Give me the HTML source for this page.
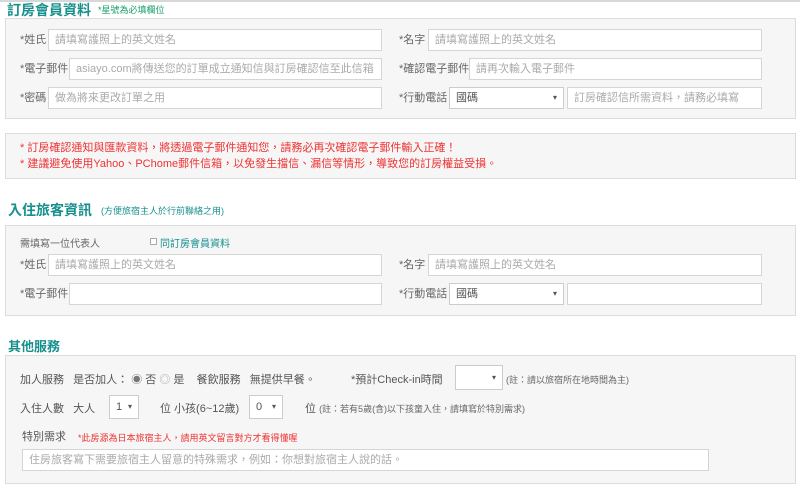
<!DOCTYPE html>
<html><head><meta charset="utf-8"><style>
*{box-sizing:border-box;margin:0;padding:0}
body{width:800px;height:490px;background:#fff;font-family:"Liberation Sans","Noto Sans CJK TC",sans-serif;position:relative;overflow:hidden;color:#555;font-size:11px}
.a{position:absolute;white-space:nowrap}
.panel{position:absolute;left:5px;width:791px;background:#f6f6f6;border:1px solid #dcdcdc}
.inp{position:absolute;height:22px;background:#fff;border:1px solid #d5d5d5;color:#aaa;font-size:11px;line-height:20px;padding-left:6px;white-space:nowrap;overflow:hidden}
.lab{position:absolute;font-size:11px;color:#666;line-height:22px;white-space:nowrap}
.h{position:absolute;color:#17908d;font-weight:bold;font-size:14px;white-space:nowrap}
.sel{position:absolute;background:#fff;border:1px solid #ccc;color:#555;font-size:11px;padding-left:6px}
.sel:after{content:"▾";position:absolute;right:6px;top:0;font-size:8px;color:#555}
</style></head><body>
<div style="position:absolute;left:0;top:0;width:800px;height:2px;background:#d8d8d8"></div>
<div class="h" style="left:7px;top:0px">訂房會員資料</div>
<div class="a" style="left:98px;top:3px;font-size:9px;color:#17a06a">*星號為必填欄位</div>
<div class="panel" style="top:18px;height:101px"></div>
<div class="lab" style="left:20px;top:29px">*姓氏</div><div class="inp" style="left:48px;top:29px;width:334px">請填寫護照上的英文姓名</div>
<div class="lab" style="left:399px;top:29px">*名字</div><div class="inp" style="left:428px;top:29px;width:334px">請填寫護照上的英文姓名</div>
<div class="lab" style="left:20px;top:58px">*電子郵件</div><div class="inp" style="left:69px;top:58px;width:313px">asiayo.com將傳送您的訂單成立通知信與訂房確認信至此信箱</div>
<div class="lab" style="left:399px;top:58px">*確認電子郵件</div><div class="inp" style="left:469px;top:58px;width:293px">請再次輸入電子郵件</div>
<div class="lab" style="left:20px;top:87px">*密碼</div><div class="inp" style="left:48px;top:87px;width:334px">做為將來更改訂單之用</div>
<div class="lab" style="left:399px;top:87px">*行動電話</div><div class="sel" style="left:449px;top:87px;width:115px;height:22px;line-height:20px">國碼</div>
<div class="inp" style="left:567px;top:87px;width:195px">訂房確認信所需資料，請務必填寫</div>

<div class="panel" style="top:133px;height:46px"></div>
<div class="a" style="left:20px;top:140px;color:#e33;font-size:11px;line-height:16px">* 訂房確認通知與匯款資料，將透過電子郵件通知您，請務必再次確認電子郵件輸入正確！<br>* 建議避免使用Yahoo、PChome郵件信箱，以免發生擋信、漏信等情形，導致您的訂房權益受損。</div>

<div class="h" style="left:8px;top:200px">入住旅客資訊</div>
<div class="a" style="left:101px;top:204px;font-size:9px;color:#17908d">(方便旅宿主人於行前聯絡之用)</div>
<div class="panel" style="top:225px;height:91px"></div>
<div class="a" style="left:20px;top:235px;font-size:10px;color:#666">需填寫一位代表人</div>
<div class="a" style="left:150px;top:238px;width:7px;height:7px;border:1px solid #aaa;background:#fff"></div>
<div class="a" style="left:160px;top:235px;font-size:10px;color:#17908d">同訂房會員資料</div>
<div class="lab" style="left:20px;top:254px">*姓氏</div><div class="inp" style="left:48px;top:254px;width:334px">請填寫護照上的英文姓名</div>
<div class="lab" style="left:399px;top:254px">*名字</div><div class="inp" style="left:428px;top:254px;width:334px">請填寫護照上的英文姓名</div>
<div class="lab" style="left:20px;top:283px">*電子郵件</div><div class="inp" style="left:69px;top:283px;width:313px"></div>
<div class="lab" style="left:399px;top:283px">*行動電話</div><div class="sel" style="left:449px;top:283px;width:115px;height:22px;line-height:20px">國碼</div>
<div class="inp" style="left:567px;top:283px;width:195px"></div>

<div class="h" style="left:8px;top:336px;font-size:13px">其他服務</div>
<div class="panel" style="top:355px;height:129px"></div>
<div class="a" style="left:20px;top:371px;font-size:11px;color:#555">加人服務 &nbsp; 是否加人： <span style="color:#777">◉</span> 否 <span style="color:#aaa">◎</span> 是 &nbsp;&nbsp; 餐飲服務 &nbsp; 無提供早餐。</div>
<div class="a" style="left:351px;top:371px;font-size:11px;color:#555">*預計Check-in時間</div>
<div class="sel" style="left:455px;top:365px;width:48px;height:25px"></div>
<div class="sel" style="left:455px;top:365px;width:48px;height:25px;line-height:23px;border:1px solid #ccc"></div>
<div class="a" style="left:506px;top:373px;font-size:9px;color:#666">(註：請以旅宿所在地時間為主)</div>
<div class="a" style="left:20px;top:400px;font-size:11px;color:#555">入住人數 &nbsp; 大人</div>
<div class="sel" style="left:109px;top:395px;width:30px;height:24px;line-height:22px">1</div>
<div class="a" style="left:160px;top:400px;font-size:11px;color:#555">位 小孩(6~12歲)</div>
<div class="sel" style="left:249px;top:395px;width:34px;height:24px;line-height:22px">0</div>
<div class="a" style="left:305px;top:400px;font-size:11px;color:#555">位 <span style="font-size:9px;color:#666">(註：若有5歲(含)以下孩童入住，請填寫於特別需求)</span></div>
<div class="a" style="left:22px;top:428px;font-size:11px;color:#555">特別需求</div>
<div class="a" style="left:78px;top:431px;font-size:9px;color:#e33">*此房源為日本旅宿主人，請用英文留言對方才看得懂喔</div>
<div class="inp" style="left:22px;top:449px;width:687px;height:22px">住房旅客寫下需要旅宿主人留意的特殊需求，例如：你想對旅宿主人說的話。</div>
</body></html>
